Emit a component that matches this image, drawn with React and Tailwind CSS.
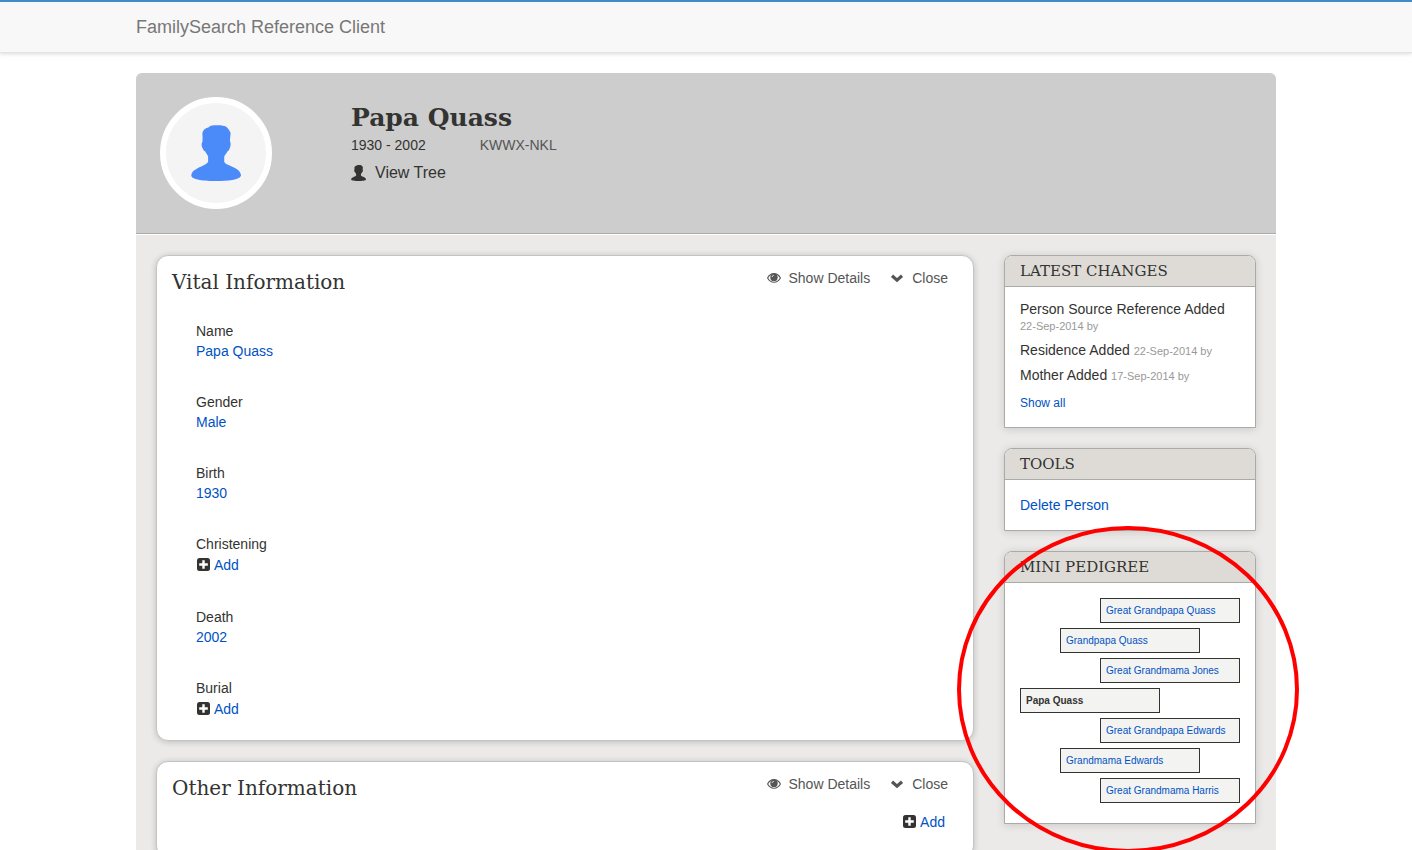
const VITALS = [
  { label: "Name", value: "Papa Quass" },
  { label: "Gender", value: "Male" },
  { label: "Birth", value: "1930" },
  { label: "Christening" },
  { label: "Death", value: "2002" },
  { label: "Burial" },
];

const CHANGES = [
  { title: "Person Source Reference Added", date: "22-Sep-2014 by" },
  { title: "Residence Added", date: "22-Sep-2014 by" },
  { title: "Mother Added", date: "17-Sep-2014 by" },
];

const PEDIGREE = [
  { name: "Great Grandpapa Quass", indent: "ml-20" },
  { name: "Grandpapa Quass", indent: "ml-10" },
  { name: "Great Grandmama Jones", indent: "ml-20" },
  { name: "Papa Quass", indent: "ml-0", current: true },
  { name: "Great Grandpapa Edwards", indent: "ml-20" },
  { name: "Grandmama Edwards", indent: "ml-10" },
  { name: "Great Grandmama Harris", indent: "ml-20" },
];

const SLAB = "font-['DejaVu_Serif',serif]";

function PersonIcon({ className }) {
  return (
    <svg viewBox="17 15 149 168" className={className} fill="currentColor" preserveAspectRatio="none" aria-hidden="true">
      <path d="M70 22 C73 17 80 15 92 16 C104 15 114 17 122 20 C127 24 131 30 135 38 C135 46 133 54 133 64 C136 68 136 78 132 86 C130 91 128 93 126 94 C123 100 118 105 116 110 L116 126 C120 133 136 138 148 144 C158 149 166 158 166 167 C162 179 126 183 92 183 C58 183 20 179 18 167 C18 156 28 149 38 144 C48 139 63 133 68 126 L68 110 C66 103 61 99 59 94 C56 93 54 91 53 87 C48 80 47 70 51 65 C52 56 51 46 51 38 C54 29 61 24 70 22 Z" />
    </svg>
  );
}

function EyeIcon() {
  return (
    <svg viewBox="0 0 14 10" className="h-[10px] w-[14px]" aria-hidden="true">
      <path d="M0.6 5 C3.6 -0.8 10.4 -0.8 13.4 5 C10.4 10.6 3.6 10.6 0.6 5 Z" fill="none" stroke="currentColor" strokeWidth="1.1" />
      <circle cx="7" cy="4.4" r="3.7" fill="currentColor" />
      <path d="M5 4 A2 2 0 0 1 6.8 2.3" fill="none" stroke="#fff" strokeWidth="0.8" />
    </svg>
  );
}

function ChevronIcon() {
  return (
    <svg viewBox="0 0 14 10" className="h-[10px] w-[14px]" aria-hidden="true">
      <path d="M2 2.8 L7 7.2 L12 2.8" fill="none" stroke="currentColor" strokeWidth="3.2" />
    </svg>
  );
}

function AddLink() {
  return (
    <a href="#add" className="flex h-[22px] items-center gap-1 pl-px text-[#0052c4]">
      <svg viewBox="0 0 13 13" className="mb-0.5 h-[13px] w-[13px]" aria-hidden="true">
        <rect width="13" height="13" rx="2.5" fill="#333331" />
        <path d="M6.5 2.2 V10.8 M2.2 6.5 H10.8" stroke="#fff" strokeWidth="2.4" />
      </svg>
      Add
    </a>
  );
}

function Card({ title, className = "", children }) {
  return (
    <section className={`rounded-xl border border-[#c4c4c4] bg-white shadow-[0_1px_6px_rgba(0,0,0,0.2)] ${className}`}>
      <header className="flex items-start justify-between pt-3 pr-[25px] pl-[15px]">
        <h2 className={`pt-0.5 text-xl leading-6 ${SLAB}`}>{title}</h2>
        <div className="flex gap-5 text-[#555]">
          <button type="button" className="flex h-5 items-center gap-2">
            <EyeIcon />
            Show Details
          </button>
          <button type="button" className="flex h-5 items-center gap-2">
            <ChevronIcon />
            Close
          </button>
        </div>
      </header>
      {children}
    </section>
  );
}

function SideCard({ title, children }) {
  return (
    <section className="relative rounded-t-lg border border-[#aaa] bg-white shadow-[0_1px_8px_rgba(0,0,0,0.15)]">
      <h2 className={`rounded-t-[7px] border-b border-[#aaa] bg-[#dedbd6] px-[15px] text-[15px] leading-[30px] uppercase ${SLAB}`}>
        {title}
      </h2>
      {children}
    </section>
  );
}

export default function App() {
  return (
    <div className="h-screen overflow-x-hidden overflow-y-auto bg-white font-['Liberation_Sans',Arial,sans-serif] text-sm leading-5 text-[#333331] [scrollbar-width:none]">
      <nav className="border-t-2 border-b border-t-[#428bca] border-b-[#e3e3e3] bg-[#f8f8f8] shadow-[0_1px_4px_rgba(0,0,0,0.15)]">
        <div className="mx-auto max-w-[1140px] py-[15px]">
          <a href="#home" className="block text-lg leading-5 text-[#777]">FamilySearch Reference Client</a>
        </div>
      </nav>

      <main className="mx-auto mt-5 max-w-[1140px] rounded-t-md bg-[#ebeae8]">
        <header className="flex gap-[79px] rounded-t-md border-b border-[#aaa] bg-[#cdcdcd] p-6 shadow-[0_1px_0_#fff]">
          <div className="flex h-28 w-28 shrink-0 items-center justify-center rounded-full border-6 border-white bg-[#f4f4f4]">
            <PersonIcon className="h-14 w-[50px] text-[#4a8af9]" />
          </div>
          <div className="pt-1">
            <h1 className={`text-[25px] leading-[34px] font-bold ${SLAB}`}>Papa Quass</h1>
            <div className="flex gap-[54px]">
              <span>1930 - 2002</span>
              <span className="text-[#555]">KWWX-NKL</span>
            </div>
            <a href="#tree" className="mt-2 flex items-center gap-[9px] text-base leading-5">
              <PersonIcon className="h-4 w-[15px]" />
              View Tree
            </a>
          </div>
        </header>

        <div className="flex items-start gap-[30px] p-5 pt-[21px]">
          <div className="flex min-w-0 flex-1 flex-col gap-5">
            <Card title="Vital Information">
              <dl className="flex flex-col gap-[31px] px-[39px] pt-[27px] pb-5">
                {VITALS.map(({ label, value }) => (
                  <div key={label}>
                    <dt>{label}</dt>
                    <dd>{value ? <a href="#edit" className="block text-[#0052c4]">{value}</a> : <AddLink />}</dd>
                  </div>
                ))}
              </dl>
            </Card>
            <Card title="Other Information" className="pb-6">
              <div className="flex justify-end pt-[11px] pr-7">
                <AddLink />
              </div>
            </Card>
          </div>

          <aside className="flex w-[252px] shrink-0 flex-col gap-5">
            <SideCard title="Latest Changes">
              <ul className="flex flex-col gap-[9px] px-[15px] pt-[14px] leading-4">
                {CHANGES.map(({ title, date }) => (
                  <li key={title}>
                    {title} <span className="text-[11px] leading-none whitespace-nowrap text-[#999]">{date}</span>
                  </li>
                ))}
              </ul>
              <a href="#changes" className="mx-[15px] mt-3 mb-4 block text-xs leading-4 text-[#0052c4]">Show all</a>
            </SideCard>

            <SideCard title="Tools">
              <a href="#delete" className="block p-[15px] text-[#0052c4]">Delete Person</a>
            </SideCard>

            <SideCard title="Mini Pedigree">
              <ul className="flex flex-col gap-[5px] px-[15px] pt-[15px] pb-5 text-[10px] leading-[23px]">
                {PEDIGREE.map(({ name, indent, current }) => (
                  <li key={name} className={`w-[140px] border border-[#333331] bg-[#f3f3f1] pl-[5px] ${indent}`}>
                    {current ? <strong>{name}</strong> : <a href="#person" className="text-[#0052c4]">{name}</a>}
                  </li>
                ))}
              </ul>
              <svg viewBox="0 0 342 327" className="pointer-events-none absolute -top-[26px] -left-12 h-[327px] w-[342px]" aria-hidden="true">
                <ellipse cx="171" cy="163.5" rx="169" ry="161.5" fill="none" stroke="#f00" strokeWidth="4" />
              </svg>
            </SideCard>
          </aside>
        </div>
      </main>
    </div>
  );
}
